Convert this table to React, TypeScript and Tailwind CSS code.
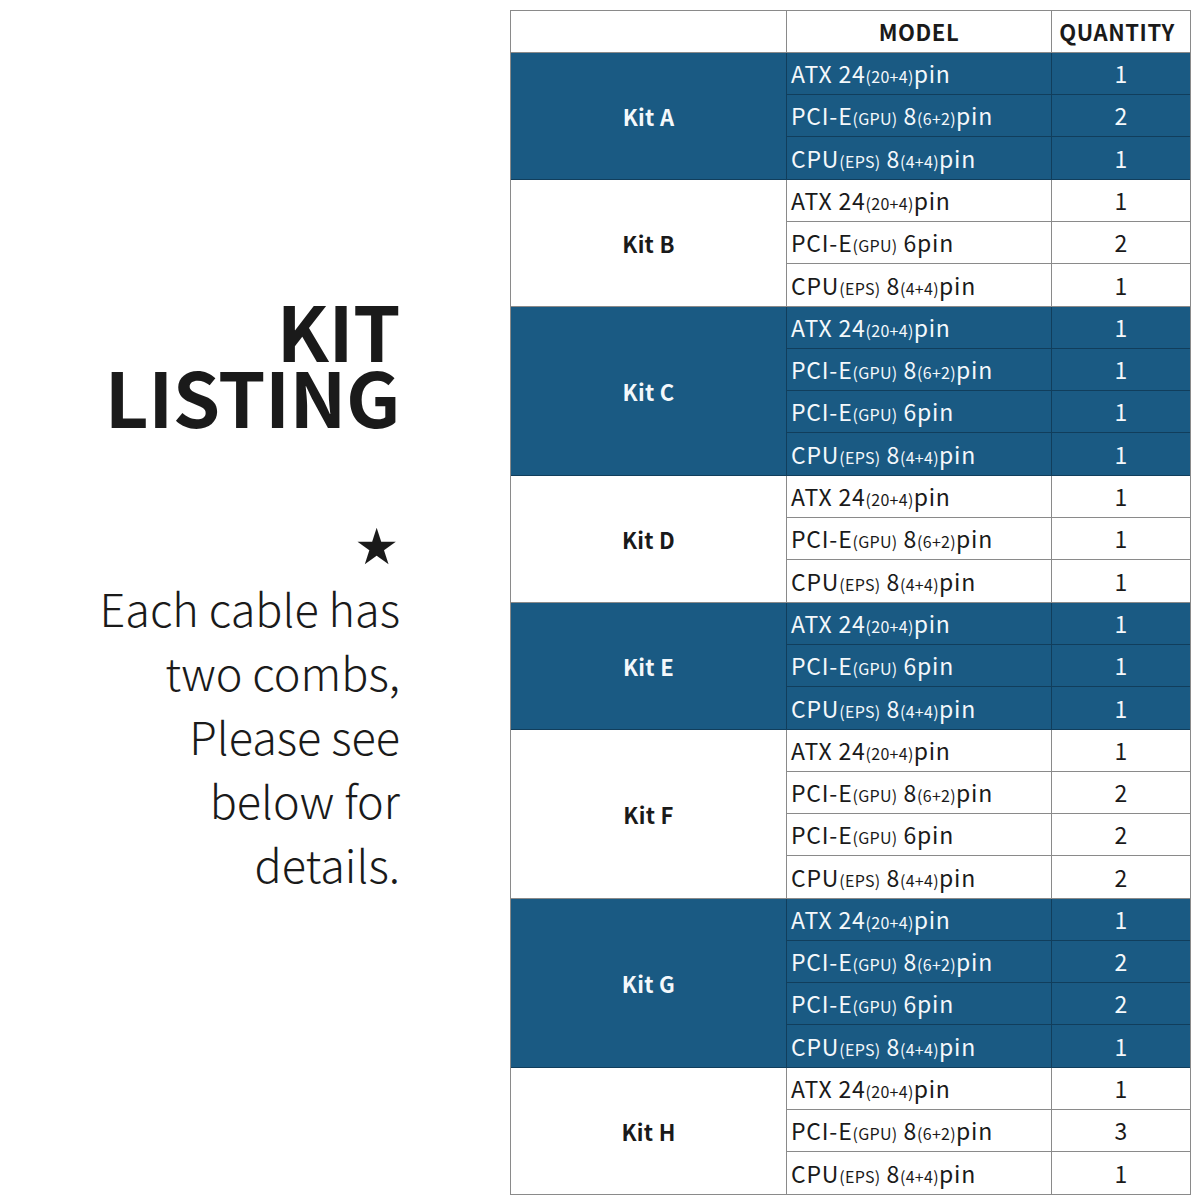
import React from "react";

type Item = { name: string; qty: number };
type Kit = { label: string; items: Item[]; blue: boolean };

const ATX = "ATX";
const kits: Kit[] = [
  { label: "Kit A", blue: true, items: [{ name: ATX, qty: 1 }, { name: "PCIE8", qty: 2 }, { name: "CPU", qty: 1 }] },
  { label: "Kit B", blue: false, items: [{ name: ATX, qty: 1 }, { name: "PCIE6", qty: 2 }, { name: "CPU", qty: 1 }] },
  { label: "Kit C", blue: true, items: [{ name: ATX, qty: 1 }, { name: "PCIE8", qty: 1 }, { name: "PCIE6", qty: 1 }, { name: "CPU", qty: 1 }] },
  { label: "Kit D", blue: false, items: [{ name: ATX, qty: 1 }, { name: "PCIE8", qty: 1 }, { name: "CPU", qty: 1 }] },
  { label: "Kit E", blue: true, items: [{ name: ATX, qty: 1 }, { name: "PCIE6", qty: 1 }, { name: "CPU", qty: 1 }] },
  { label: "Kit F", blue: false, items: [{ name: ATX, qty: 1 }, { name: "PCIE8", qty: 2 }, { name: "PCIE6", qty: 2 }, { name: "CPU", qty: 2 }] },
  { label: "Kit G", blue: true, items: [{ name: ATX, qty: 1 }, { name: "PCIE8", qty: 2 }, { name: "PCIE6", qty: 2 }, { name: "CPU", qty: 1 }] },
  { label: "Kit H", blue: false, items: [{ name: ATX, qty: 1 }, { name: "PCIE8", qty: 3 }, { name: "CPU", qty: 1 }] },
];

function Model({ name }: { name: string }) {
  const s = "text-[16px] tracking-[0.3px]";
  if (name === "ATX")
    return (
      <span>
        ATX 24<span className={s}>(20+4)</span>pin
      </span>
    );
  if (name === "PCIE8")
    return (
      <span>
        PCI-E<span className={s}>(GPU)</span> 8<span className={s}>(6+2)</span>pin
      </span>
    );
  if (name === "PCIE6")
    return (
      <span>
        PCI-E<span className={s}>(GPU)</span> 6pin
      </span>
    );
  return (
    <span>
      CPU<span className={s}>(EPS)</span> 8<span className={s}>(4+4)</span>pin
    </span>
  );
}

function KitBlock({ kit, last }: { kit: Kit; last: boolean }) {
  const blue = kit.blue;
  const bg = blue ? "bg-[#1a5a83] text-[#f4f8fb]" : "bg-white text-[#1a1a1a]";
  const line = blue ? "border-[#113e5c]" : "border-[#8a8a8a]";
  const outerLine = last ? "" : blue ? "border-b border-[#113e5c]" : "border-b border-[#8a8a8a]";
  return (
    <div className={`flex ${bg} ${outerLine}`}>
      <div className={`w-[276px] shrink-0 flex items-center justify-center text-[22px] font-bold tracking-[0.3px] border-r ${line}`}>
        {kit.label}
      </div>
      <div className="flex-1 flex flex-col">
        {kit.items.map((it, i) => (
          <div
            key={i}
            className={`flex h-[42px] ${i < kit.items.length - 1 ? `border-b ${line}` : ""}`}
          >
            <div className={`w-[265px] shrink-0 flex items-center pl-[4px] text-[23px] tracking-[0.8px] border-r ${line} leading-none`}>
              <Model name={it.name} />
            </div>
            <div className="flex-1 flex items-center justify-center text-[23px] leading-none">{it.qty}</div>
          </div>
        ))}
      </div>
    </div>
  );
}

export default function App() {
  return (
    <div
      className="w-[1200px] h-[1200px] bg-white flex"
      style={{ fontFamily: '"Noto Sans CJK SC", "Noto Sans", sans-serif' }}
    >
      <div className="w-[510px] shrink-0 flex">
        <div className="w-[400px] flex flex-col items-end pt-[288px] text-right text-[#1a1a1a]">
          <div className="text-[76px] font-bold leading-[66px] tracking-[-0.5px]">
            <div className="pt-[8px]">KIT</div>
            <div>LISTING</div>
          </div>
          <div className="mt-[94px] text-[50px] leading-none mr-[1px]" style={{ fontFamily: '"DejaVu Sans", sans-serif' }}>★</div>
          <div className="mt-[4px] text-[45px] leading-[64px] font-light">
            <div>Each cable has</div>
            <div>two combs,</div>
            <div>Please see</div>
            <div>below for</div>
            <div>details.</div>
          </div>
        </div>
      </div>
      <div className="pt-[10px]">
        <div className="w-[681px] border border-[#8a8a8a]">
          <div className="flex h-[42px] border-b border-[#8a8a8a] text-[#1a1a1a] font-bold text-[22px] tracking-[0.6px]">
            <div className="w-[276px] border-r border-[#8a8a8a]" />
            <div className="w-[265px] border-r border-[#8a8a8a] flex items-center justify-center">MODEL</div>
            <div className="flex-1 flex items-center justify-center pr-[8px]">QUANTITY</div>
          </div>
          {kits.map((k, i) => (
            <KitBlock key={k.label} kit={k} last={i === kits.length - 1} />
          ))}
        </div>
      </div>
    </div>
  );
}
